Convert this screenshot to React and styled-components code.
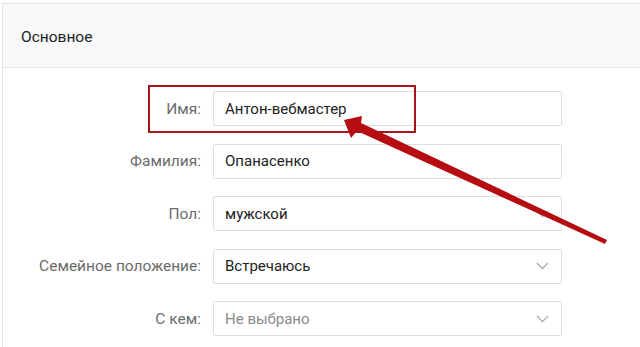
import React from "react";
import styled, { createGlobalStyle } from "styled-components";

const Global = createGlobalStyle`
  html, body { margin: 0; padding: 0; background: #fff; }
  body { font-family: Roboto, "Noto Sans", Arial, sans-serif; }
  * { box-sizing: border-box; }
`;

const Page = styled.div`
  position: relative;
  width: 640px;
  height: 347px;
  overflow: hidden;
  background: #fff;
  padding: 3px 0 0 2px;
`;

const Card = styled.section`
  border-top: 1px solid #dfe1e5;
  border-left: 1px solid #e3e4e8;
  height: 100%;
  background: #fff;
`;

const Header = styled.header`
  height: 64px;
  background: #f9f9fb;
  border-bottom: 1px solid #e5e6ea;
  display: flex;
  align-items: center;
  padding-left: 18px;
  font-size: 15.5px;
  color: #222;
  padding-top: 2px;
`;

const Form = styled.div`
  display: grid;
  grid-template-columns: 198px 349px;
  column-gap: 12px;
  row-gap: 17.5px;
  padding-top: 23px;
`;

const Label = styled.label`
  text-align: right;
  font-size: 15.5px;
  color: #6b6b6b;
  align-self: center;
`;

const Field = styled.div`
  height: 35px;
  border: 1px solid #dcdee2;
  border-radius: 2px;
  display: flex;
  align-items: center;
  justify-content: space-between;
  padding: 0 12px 0 11px;
  font-size: 15px;
  color: ${(p) => (p.$placeholder ? "#8a8a8a" : "#222")};
  background: #fff;
`;

const Chevron = () => (
  <svg width="13" height="8" viewBox="0 0 13 8" fill="none">
    <path d="M1 1l5.5 5.5L12 1" stroke="#a9adb3" strokeWidth="1.4" />
  </svg>
);

const Highlight = styled.div`
  position: absolute;
  left: 148px;
  top: 85px;
  width: 268px;
  height: 48px;
  border: 2px solid #a8141a;
  pointer-events: none;
`;

const ArrowSvg = styled.svg`
  position: absolute;
  left: 0;
  top: 0;
  pointer-events: none;
`;

const rows = [
  { label: "Имя:", value: "Антон-вебмастер" },
  { label: "Фамилия:", value: "Опанасенко" },
  { label: "Пол:", value: "мужской", select: true },
  { label: "Семейное положение:", value: "Встречаюсь", select: true },
  { label: "С кем:", value: "Не выбрано", select: true, placeholder: true },
];

export default function App() {
  return (
    <>
      <Global />
      <Page>
        <Card>
          <Header>Основное</Header>
          <Form>
            {rows.map((r) => (
              <React.Fragment key={r.label}>
                <Label>{r.label}</Label>
                <Field $placeholder={r.placeholder}>
                  <span>{r.value}</span>
                  {r.select && <Chevron />}
                </Field>
              </React.Fragment>
            ))}
          </Form>
        </Card>
        <Highlight />
        <ArrowSvg width="640" height="347" viewBox="0 0 640 347">
          <polygon
            points="344,120 362,116 361,123 607,240 605,244 357,131 351,138"
            fill="#b50d12"
          />
        </ArrowSvg>
      </Page>
    </>
  );
}
